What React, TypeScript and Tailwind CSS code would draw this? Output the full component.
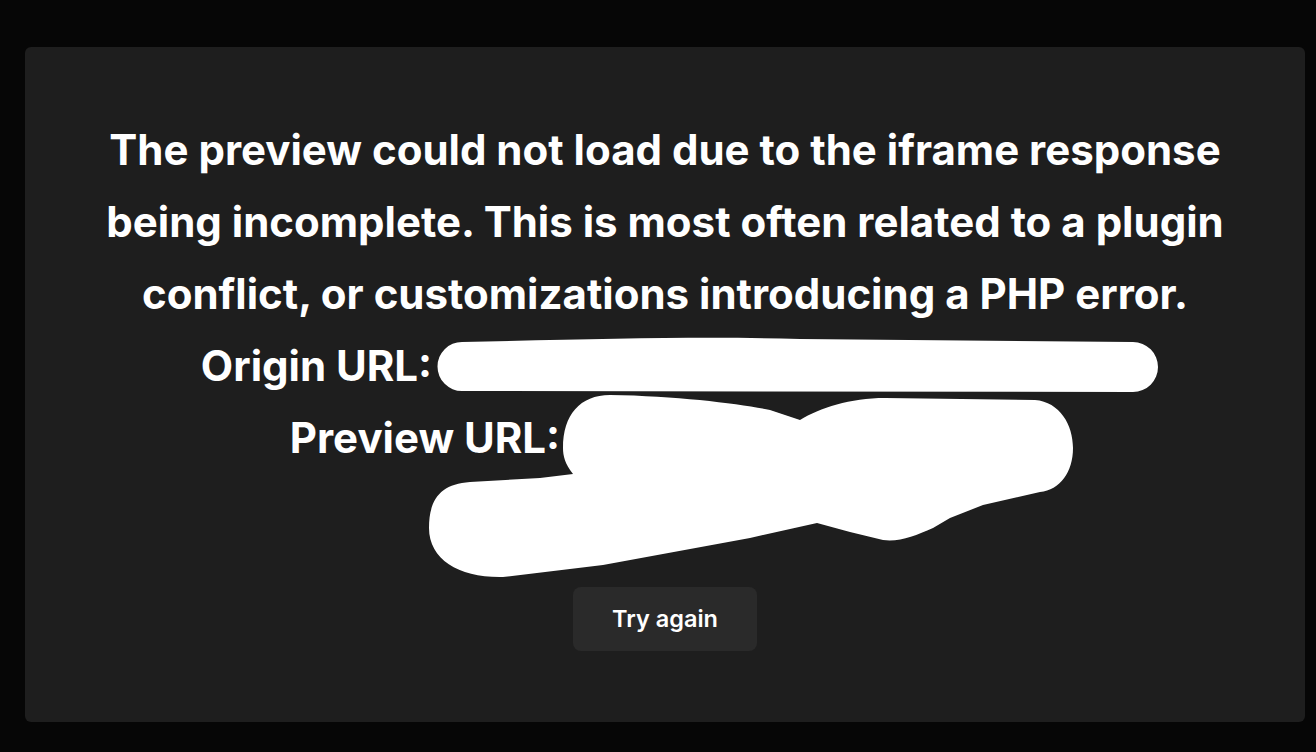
export default function App() {
  return (
    <div
      className="relative h-[752px] w-[1316px] overflow-hidden bg-[#060606]"
      style={{ fontFamily: "Inter, 'Noto Sans', sans-serif" }}
    >
      <div className="ml-[25px] mt-[47px] flex h-[675px] w-[1280px] flex-col items-center justify-center rounded-[6px] bg-[#1e1e1e] pb-[4px] text-white">
        <h1 className="whitespace-nowrap text-center text-[42px] font-bold leading-[72px]">
          The preview could not load due to the iframe response
          <br />
          being incomplete. This is most often related to a plugin
          <br />
          conflict, or customizations introducing a PHP error.
        </h1>
        <p className="flex items-center whitespace-nowrap text-[42px] font-bold leading-[72px]">
          <span>Origin URL:</span>
          <span className="inline-block h-[40px] w-[697px]" />
        </p>
        <p className="flex items-center whitespace-nowrap text-[42px] font-bold leading-[72px]">
          <span>Preview URL:</span>
          <span className="inline-block h-[40px] w-[480px]" />
        </p>
        <div className="h-[113px]" />
        <button className="h-[64px] w-[184px] rounded-[8px] bg-[#2a2a2a] text-[23.5px] font-semibold text-white">
          Try again
        </button>
      </div>
      <svg
        className="pointer-events-none absolute left-0 top-0"
        width="1316"
        height="752"
        viewBox="0 0 1316 752"
      >
        <g fill="#ffffff">
          <path d="M462 342 C600 339 700 336 800 339 L1133 342 A25 25 0 0 1 1133 392 L462 391 A24.5 24.5 0 0 1 462 342 Z" />
          <path d="M429 528 C429 500 440 484 470 482 L540 478 L573 474 C565 464 563 456 563 448 C563 415 580 395 610 395 C680 396 740 404 770 410 L800 420 C820 408 850 398 885 398 L1035 400 C1060 402 1073 425 1073 448 C1073 472 1060 490 1040 492 L983 505 L950 518 L933 528 C915 536 900 542 883 540 L850 532 L817 523 L750 538 L603 565 L503 577 C460 578 429 560 429 528 Z" />
        </g>
      </svg>
    </div>
  );
}
